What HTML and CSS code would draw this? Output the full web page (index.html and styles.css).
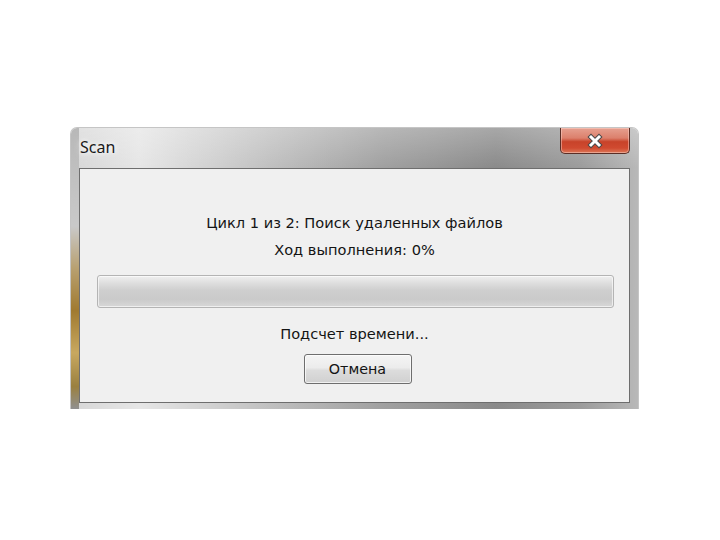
FILE: index.html
```html
<!DOCTYPE html>
<html lang="ru">
<head>
<meta charset="utf-8">
<title>Scan</title>
<link rel="stylesheet" href="styles.css">
</head>
<body>
<div class="window">
  <div class="titlebar">
    <span class="title">Scan</span>
    <div class="close">
      <svg width="20" height="16" viewBox="0 0 20 16">
        <path d="M6 4 L14 12 M14 4 L6 12" stroke="#4a4a4a" stroke-width="5" stroke-linecap="square"/>
        <path d="M6 4 L14 12 M14 4 L6 12" stroke="#ffffff" stroke-width="3" stroke-linecap="square"/>
      </svg>
    </div>
  </div>
  <div class="client">
    <div class="line first">Цикл 1 из 2: Поиск удаленных файлов</div>
    <div class="line second">Ход выполнения: 0%</div>
    <div class="progress"></div>
    <div class="line third">Подсчет времени...</div>
    <button class="btn">Отмена</button>
  </div>
</div>
</body>
</html>
```

FILE: styles.css
```css
html, body {
  margin: 0;
  padding: 0;
  background: #ffffff;
}
body {
  padding-top: 128px;
  padding-left: 71px;
}
.window {
  width: 567px;
  height: 281px;
  box-sizing: border-box;
  padding: 0 8px 6px 8px;
  border-radius: 6px 6px 0 0;
  background:
    linear-gradient(to bottom, #b8b8b8 0%, #c9c9c9 35%, #b8a070 50%, #a07a30 65%, #c8a860 80%, #9a8040 92%, #909090 100%) left top / 8px 100% no-repeat,
    linear-gradient(to bottom, rgba(255,255,255,0.25), rgba(255,255,255,0) 40px),
    linear-gradient(to right, #d6d6d6 0%, #e6e6e6 12%, #c0c0c0 35%, #a0a0a0 55%, #8a8a8a 75%, #9c9c9c 90%, #b8b8b8 100%);
  box-shadow: 0 0 0 1px rgba(90,90,90,0.35);
  display: flex;
  flex-direction: column;
}
.titlebar {
  height: 40px;
  display: flex;
  justify-content: space-between;
  align-items: flex-start;
}
.title {
  font-family: "Noto Sans", "DejaVu Sans", sans-serif;
  font-size: 16px;
  color: #1a1a1a;
  margin-top: 8px;
  margin-left: 1px;
  text-shadow: 0 0 8px #ffffff, 0 0 4px #ffffff;
}
.close {
  width: 70px;
  height: 26px;
  box-sizing: border-box;
  border: 1px solid #5a2e26;
  border-top: none;
  border-radius: 0 0 5px 5px;
  background: linear-gradient(to bottom, #e6a090 0%, #dc806c 40%, #c8432a 55%, #d04a30 80%, #dc7858 100%);
  box-shadow: inset 0 0 0 1px rgba(255,220,210,0.45);
  display: flex;
  align-items: center;
  justify-content: center;
}
.client {
  flex: 1;
  background: #f0f0f0;
  border: 1px solid #6e6e6e;
  display: flex;
  flex-direction: column;
  align-items: center;
  font-family: "DejaVu Sans", sans-serif;
  font-size: 14.6px;
  color: #141414;
}
.line {
  line-height: 16px;
}
.first {
  margin-top: 46px;
}
.second {
  margin-top: 11px;
}
.progress {
  align-self: stretch;
  margin: 17px 15px 0 17px;
  height: 33px;
  box-sizing: border-box;
  border: 1px solid #b4b4b4;
  border-radius: 3px;
  background: linear-gradient(to bottom, #f0f0f0 0%, #e0e0e0 20%, #cfcfcf 45%, #cacaca 75%, #d8d8d8 100%);
  box-shadow: inset 0 0 0 1px rgba(255,255,255,0.6);
}
.third {
  margin-top: 18px;
}
.btn {
  margin-top: 12px;
  width: 108px;
  height: 30px;
  box-sizing: border-box;
  border: 1px solid #6e6e6e;
  border-radius: 3px;
  background: linear-gradient(to bottom, #f4f4f4 0%, #ececec 45%, #dcdcdc 55%, #d0d0d0 100%);
  box-shadow: inset 0 0 0 1px rgba(255,255,255,0.7);
  font-family: "DejaVu Sans", sans-serif;
  font-size: 14.3px;
  color: #141414;
  padding: 0;
  margin-left: 6px;
}
```
